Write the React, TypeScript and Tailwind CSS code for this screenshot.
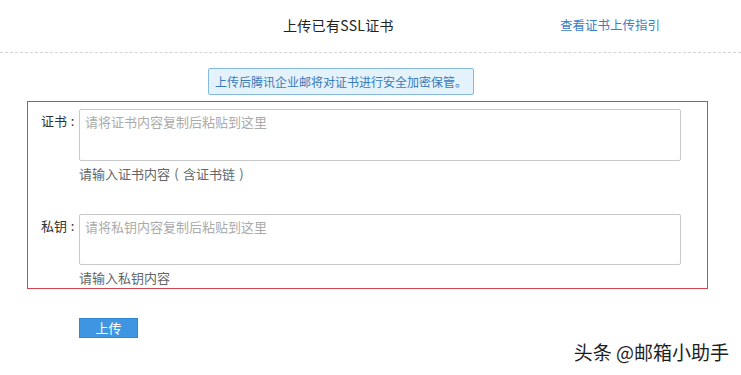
import React from "react";

const font = { fontFamily: '"Microsoft YaHei", "Noto Sans CJK SC", "Noto Sans", sans-serif' };

function Label({ text }: { text: string }) {
  return (
    <div className="w-[51px] pr-[1px] pt-[2px] flex justify-end text-[13px] leading-[20px] text-[#333]">
      <span>{text}</span>
      <span className="inline-block w-[11px] text-center">:</span>
    </div>
  );
}

function Paren({ c }: { c: string }) {
  return <span className="inline-block w-[13px] text-center">{c}</span>;
}

export default function App() {
  return (
    <div
      className="relative w-[741px] h-[375px] bg-white overflow-hidden text-[#333]"
      style={font}
    >
      {/* header */}
      <div className="flex items-center h-[53px] border-b border-dashed border-[#d4d4d4] pb-[2px]">
        <div className="ml-[283px] w-[277px] text-[14px] leading-[20px] text-[#222] tracking-[0.3px]">上传已有SSL证书</div>
        <a className="text-[12.5px] leading-[20px] text-[#3b7fc4] cursor-pointer">查看证书上传指引</a>
      </div>

      {/* notice */}
      <div className="ml-[208px] mt-[15px] inline-flex items-center h-[27px] px-[6px] border border-[#86b9df] bg-[#e4f2fc] text-[12px] text-[#3a79b8] rounded-[2px]">
        上传后腾讯企业邮将对证书进行安全加密保管。
      </div>

      {/* form with red outline */}
      <div className="ml-[27px] mt-[6px] w-[681px] h-[188px] border border-[#cf4550] pt-[7px]">
        <div className="flex">
          <Label text="证书" />
          <div className="flex flex-col">
            <textarea
              className="w-[602px] h-[52px] resize-none border border-[#c8c8c8] rounded-[2px] px-[5px] py-[2px] text-[13px] leading-[20px] placeholder:text-[#ababab] outline-none"
              style={font}
              placeholder="请将证书内容复制后粘贴到这里"
            />
            <div className="mt-[3px] text-[13px] leading-[20px] text-[#666]">
              请输入证书内容<Paren c="(" />含证书链<Paren c=")" />
            </div>
          </div>
        </div>

        <div className="flex mt-[30px]">
          <Label text="私钥" />
          <div className="flex flex-col">
            <textarea
              className="w-[602px] h-[51px] resize-none border border-[#c8c8c8] rounded-[2px] px-[5px] py-[2px] text-[13px] leading-[20px] placeholder:text-[#ababab] outline-none"
              style={font}
              placeholder="请将私钥内容复制后粘贴到这里"
            />
            <div className="mt-[3px] text-[13px] leading-[20px] text-[#666]">请输入私钥内容</div>
          </div>
        </div>
      </div>

      {/* upload button */}
      <button
        className="ml-[79px] mt-[29px] w-[59px] h-[20px] bg-[#3e95e2] border border-[#2f86d4] text-white text-[13px] leading-[18px] flex items-center justify-center"
        style={font}
      >
        上传
      </button>

      {/* watermark overlay */}
      <div
        className="absolute right-[12px] top-[339px] text-[19px] leading-[26px] text-[#1e1e1e]"
        style={{ textShadow: "0 0 2px #fff, 0 0 2px #fff" }}
      >
        头条 @邮箱小助手
      </div>
    </div>
  );
}
